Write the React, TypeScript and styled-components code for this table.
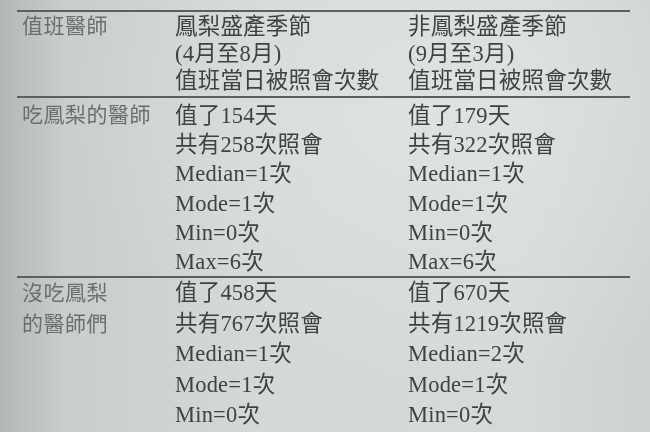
import styled, { createGlobalStyle } from 'styled-components';

const GlobalStyle = createGlobalStyle`
  html, body {
    margin: 0;
    padding: 0;
  }
  body {
    width: 650px;
    height: 432px;
    overflow: hidden;
    font-family: "Liberation Serif", "Noto Sans CJK TC", serif;
  }
`;

const Paper = styled.div`
  width: 650px;
  height: 432px;
  box-sizing: border-box;
  padding: 10px 20px 0 17px;
  background:
    radial-gradient(ellipse at 70% 25%, rgba(226, 231, 229, 0.7) 0%, rgba(226, 231, 229, 0) 60%),
    linear-gradient(90deg, #b3b8b6 0%, #c9cecc 10%, #d4d9d7 40%, #d6dbd9 80%, #cdd2d0 100%);
  overflow: hidden;
`;

const Section = styled.div<{ $line: number; $padTop: number; $padBottom: number }>`
  display: grid;
  grid-template-columns: 158px 233px 1fr;
  padding: ${(p) => p.$padTop}px 0 ${(p) => p.$padBottom}px;
  border-top: 2px solid #5b5f5e;
  line-height: ${(p) => p.$line}px;
  font-size: 22.5px;
  color: #3f4241;
  filter: blur(0.35px);
`;

const Label = styled.div`
  padding-left: 5px;
  color: #6a6e6d;
  font-size: 21px;
  letter-spacing: 0.5px;
`;

const Cell = styled.div`
  display: flex;
  flex-direction: column;
`;

const Line = styled.span`
  white-space: nowrap;
  letter-spacing: 0.2px;
`;

type Block = {
  label: string[];
  left: string[];
  right: string[];
  line: number;
  padTop: number;
  padBottom: number;
};

const blocks: Block[] = [
  {
    label: ['值班醫師'],
    left: ['鳳梨盛產季節', '(4月至8月)', '值班當日被照會次數'],
    right: ['非鳳梨盛產季節', '(9月至3月)', '值班當日被照會次數'],
    line: 27,
    padTop: 1,
    padBottom: 2,
  },
  {
    label: ['吃鳳梨的醫師'],
    left: ['值了154天', '共有258次照會', 'Median=1次', 'Mode=1次', 'Min=0次', 'Max=6次'],
    right: ['值了179天', '共有322次照會', 'Median=1次', 'Mode=1次', 'Min=0次', 'Max=6次'],
    line: 29.2,
    padTop: 3,
    padBottom: 0,
  },
  {
    label: ['沒吃鳳梨', '的醫師們'],
    left: ['值了458天', '共有767次照會', 'Median=1次', 'Mode=1次', 'Min=0次'],
    right: ['值了670天', '共有1219次照會', 'Median=2次', 'Mode=1次', 'Min=0次'],
    line: 30.5,
    padTop: 0,
    padBottom: 0,
  },
];

export default function App() {
  return (
    <>
      <GlobalStyle />
      <Paper>
        {blocks.map((b) => (
          <Section key={b.label[0]} $line={b.line} $padTop={b.padTop} $padBottom={b.padBottom}>
            <Label>
              {b.label.map((l) => (
                <div key={l}>{l}</div>
              ))}
            </Label>
            <Cell>
              {b.left.map((l) => (
                <Line key={l}>{l}</Line>
              ))}
            </Cell>
            <Cell>
              {b.right.map((l) => (
                <Line key={l}>{l}</Line>
              ))}
            </Cell>
          </Section>
        ))}
      </Paper>
    </>
  );
}
